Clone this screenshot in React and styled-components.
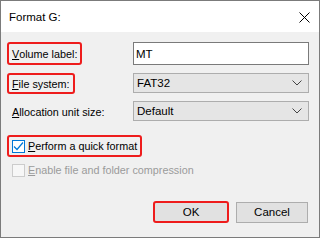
import styled, { createGlobalStyle } from "styled-components";

const Global = createGlobalStyle`
  html, body { margin: 0; padding: 0; background: #fff; }
  body { font-family: "Liberation Sans", Arial, sans-serif; }
`;

export default function App() {
  return (
    <>
      <Global />
      <Window>
        <TitleBar>
          <Title>Format G:</Title>
          <Close>
            <svg width="11" height="11" viewBox="0 0 11 11">
              <path d="M0.5 0.5 L10.5 10.5 M10.5 0.5 L0.5 10.5" stroke="#000" strokeWidth="1" />
            </svg>
          </Close>
        </TitleBar>
        <Body>
          <Form>
            <Label highlight>
              <u>V</u>olume label:
            </Label>
            <TextBox>MT</TextBox>

            <Label highlight small>
              <u>F</u>ile system:
            </Label>
            <Select>
              FAT32
              <Chevron />
            </Select>

            <Label small>
              <u>A</u>llocation unit size:
            </Label>
            <Select>
              Default
              <Chevron />
            </Select>
          </Form>

          <Checks>
            <CheckRow highlight>
              <Box checked>
                <svg width="11" height="11" viewBox="0 0 11 11">
                  <path d="M1 5.5 L4 8.5 L10 1.5" fill="none" stroke="#0078d7" strokeWidth="1.2" />
                </svg>
              </Box>
              <span>
                <u>P</u>erform a quick format
              </span>
            </CheckRow>
            <CheckRow disabled>
              <Box disabled />
              <span>
                <u>E</u>nable file and folder compression
              </span>
            </CheckRow>
          </Checks>

          <Buttons>
            <Button highlight>OK</Button>
            <Button>Cancel</Button>
          </Buttons>
        </Body>
      </Window>
    </>
  );
}

function Chevron() {
  return (
    <ChevronIcon width="10" height="6" viewBox="0 0 10 6">
      <path d="M0.5 0.5 L5 5 L9.5 0.5" fill="none" stroke="#444" strokeWidth="1" />
    </ChevronIcon>
  );
}

const Window = styled.div`
  width: 318px;
  height: 236px;
  border: 1px solid #7b7b7b;
  display: flex;
  flex-direction: column;
  color: #000;
  font-size: 10.8px;
`;

const TitleBar = styled.div`
  height: 31px;
  background: #fff;
  display: flex;
  align-items: center;
  justify-content: space-between;
  padding: 0 9px 0 8px;
`;

const Title = styled.div`
  font-size: 11.5px;
  margin-top: 1px;
`;

const Close = styled.div`
  display: flex;
  margin-top: 1px;
`;

const Body = styled.div`
  flex: 1;
  background: #f0f0f0;
  padding: 10px 10px 0 6px;
  display: flex;
  flex-direction: column;
`;

const Form = styled.div`
  display: grid;
  grid-template-columns: 126px 176px;
  grid-template-rows: 23px 20px 20px;
  row-gap: 8px;
  align-items: start;
`;

const Label = styled.div`
  height: ${({ small }) => (small ? "21px" : "23px")};
  box-sizing: border-box;
  justify-self: start;
  display: flex;
  align-items: center;
  padding: 0 3px 0 3px;
  border: 2px solid ${({ highlight }) => (highlight ? "#ee1c1c" : "transparent")};
  border-radius: 3px;
  white-space: nowrap;
`;

const TextBox = styled.div`
  height: 23px;
  box-sizing: border-box;
  border: 1px solid #7a7a7a;
  background: #fff;
  display: flex;
  align-items: center;
  padding-left: 2px;
  font-size: 11.5px;
`;

const Select = styled.div`
  height: 20px;
  box-sizing: border-box;
  border: 1px solid #adadad;
  background: #e5e5e5;
  display: flex;
  align-items: center;
  justify-content: space-between;
  padding: 0 6px 0 3px;
  font-size: 11.5px;
`;

const ChevronIcon = styled.svg`
  display: block;
`;

const Checks = styled.div`
  margin-top: 14px;
  display: flex;
  flex-direction: column;
  gap: 2px;
  align-items: flex-start;
`;

const CheckRow = styled.div`
  height: 22px;
  box-sizing: border-box;
  display: flex;
  align-items: center;
  gap: 3px;
  padding: 0 3px 0 3px;
  border: 2px solid ${({ highlight }) => (highlight ? "#ee1c1c" : "transparent")};
  border-radius: 3px;
  color: ${({ disabled }) => (disabled ? "#9b9b9b" : "#000")};
  white-space: nowrap;
`;

const Box = styled.div`
  width: 13px;
  height: 13px;
  box-sizing: border-box;
  border: 1px solid ${({ checked, disabled }) => (checked ? "#0078d7" : disabled ? "#cccccc" : "#333")};
  background: ${({ disabled }) => (disabled ? "#f7f7f7" : "#fff")};
  display: flex;
  align-items: center;
  justify-content: center;
`;

const Buttons = styled.div`
  margin-top: 20px;
  display: flex;
  justify-content: flex-end;
  align-items: center;
  gap: 7px;
  padding-right: 1px;
`;

const Button = styled.div`
  box-sizing: border-box;
  width: ${({ highlight }) => (highlight ? "76px" : "72px")};
  height: ${({ highlight }) => (highlight ? "22px" : "21px")};
  border: ${({ highlight }) => (highlight ? "2px solid #ee1c1c" : "1px solid #adadad")};
  border-radius: ${({ highlight }) => (highlight ? "3px" : "0")};
  background: #e1e1e1;
  display: flex;
  align-items: center;
  justify-content: center;
  font-size: 11.5px;
`;
